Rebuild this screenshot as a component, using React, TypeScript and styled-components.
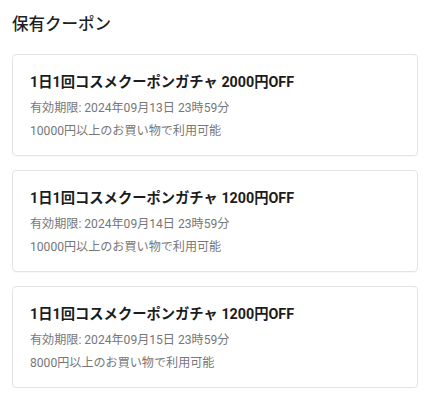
import React from 'react';
import styled, {createGlobalStyle} from 'styled-components';

const GlobalStyle = createGlobalStyle`
  body {
    margin: 0;
    background: #ffffff;
    font-family: Roboto, "Noto Sans CJK JP", sans-serif;
    -webkit-font-smoothing: antialiased;
  }
`;

const Page = styled.main`
  padding: 12px 12px 0 12px;
`;

const Heading = styled.h2`
  margin: 0 0 16px;
  font-size: 16.5px;
  line-height: 26px;
  font-weight: 500;
  color: #1f1f1f;
`;

const List = styled.ul`
  list-style: none;
  margin: 0;
  padding: 0;
  display: flex;
  flex-direction: column;
  gap: 14px;
`;

const Card = styled.li`
  border: 1px solid #e4e4e4;
  border-radius: 4px;
  padding: 17px 17px 12px;
  box-shadow: 0 1px 1px rgba(0, 0, 0, 0.03);
`;

const Title = styled.div`
  font-size: 14.3px;
  line-height: 20px;
  font-weight: 700;
  color: #1c1c1c;
  margin-bottom: 5px;
`;

const Meta = styled.div`
  font-size: 12.1px;
  line-height: 23px;
  color: #777777;
`;

type Coupon = {
  amount: number;
  expires: string;
  minimum: number;
};

const coupons: Coupon[] = [
  {amount: 2000, expires: '2024年09月13日 23時59分', minimum: 10000},
  {amount: 1200, expires: '2024年09月14日 23時59分', minimum: 10000},
  {amount: 1200, expires: '2024年09月15日 23時59分', minimum: 8000},
];

export default () => {
  return (
    <>
      <GlobalStyle />
      <Page>
        <Heading>保有クーポン</Heading>
        <List>
          {coupons.map((c, i) => (
            <Card key={i}>
              <Title>1日1回コスメクーポンガチャ {c.amount}円OFF</Title>
              <Meta>有効期限: {c.expires}</Meta>
              <Meta>{c.minimum}円以上のお買い物で利用可能</Meta>
            </Card>
          ))}
        </List>
      </Page>
    </>
  );
};
